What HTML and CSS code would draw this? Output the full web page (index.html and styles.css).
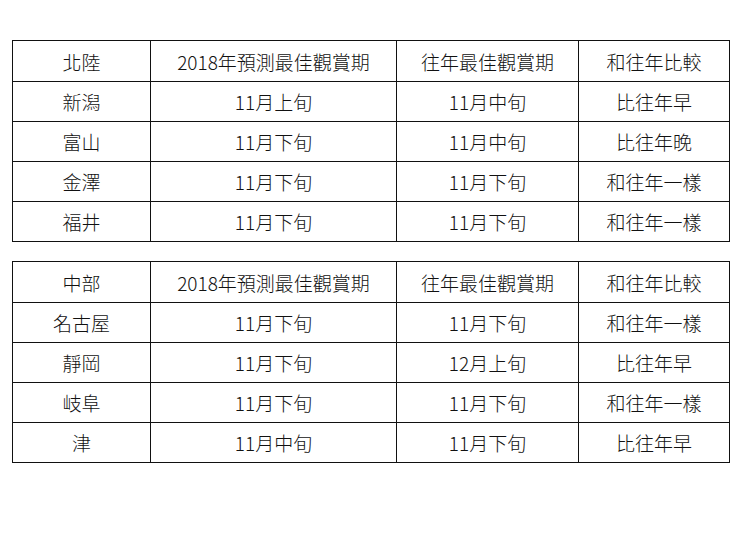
FILE: index.html
```html
<!DOCTYPE html>
<html lang="zh-Hant">
<head>
<meta charset="utf-8">
<link rel="stylesheet" href="styles.css">
</head>
<body>
<div class="page">
  <table class="bloom">
    <colgroup><col class="c1"><col class="c2"><col class="c3"><col class="c4"></colgroup>
    <tr><td>北陸</td><td>2018年預測最佳觀賞期</td><td>往年最佳觀賞期</td><td>和往年比較</td></tr>
    <tr><td>新潟</td><td>11月上旬</td><td>11月中旬</td><td>比往年早</td></tr>
    <tr><td>富山</td><td>11月下旬</td><td>11月中旬</td><td>比往年晚</td></tr>
    <tr><td>金澤</td><td>11月下旬</td><td>11月下旬</td><td>和往年一樣</td></tr>
    <tr><td>福井</td><td>11月下旬</td><td>11月下旬</td><td>和往年一樣</td></tr>
  </table>
  <table class="bloom">
    <colgroup><col class="c1"><col class="c2"><col class="c3"><col class="c4"></colgroup>
    <tr><td>中部</td><td>2018年預測最佳觀賞期</td><td>往年最佳觀賞期</td><td>和往年比較</td></tr>
    <tr><td>名古屋</td><td>11月下旬</td><td>11月下旬</td><td>和往年一樣</td></tr>
    <tr><td>靜岡</td><td>11月下旬</td><td>12月上旬</td><td>比往年早</td></tr>
    <tr><td>岐阜</td><td>11月下旬</td><td>11月下旬</td><td>和往年一樣</td></tr>
    <tr><td>津</td><td>11月中旬</td><td>11月下旬</td><td>比往年早</td></tr>
  </table>
</div>
</body>
</html>
```
FILE: styles.css
```css
html, body {
  margin: 0;
  padding: 0;
  background: #fff;
}
.page {
  padding: 40px 0 0 12px;
  display: flex;
  flex-direction: column;
  gap: 19px;
}
.bloom {
  border-collapse: collapse;
  table-layout: fixed;
  width: 717px;
  font-family: "Noto Sans CJK TC", "Noto Sans CJK JP", sans-serif;
  font-size: 19px;
  font-weight: 300;
  color: #111;
}
.bloom td {
  border: 1px solid #111;
  height: 39px;
  padding: 0;
  text-align: center;
  vertical-align: middle;
  line-height: 1;
}
.bloom tr:first-child td {
  height: 40px;
}
.c1 { width: 138px; }
.c2 { width: 246px; }
.c3 { width: 182px; }
.c4 { width: 151px; }
```
